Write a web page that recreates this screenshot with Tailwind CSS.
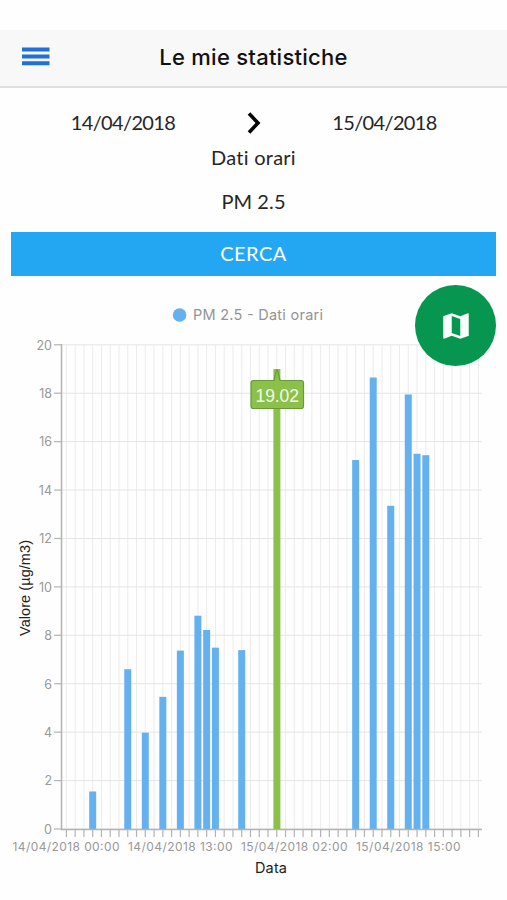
<!DOCTYPE html>
<html lang="it">
<head>
<meta charset="utf-8">
<title>Le mie statistiche</title>
<script src="https://cdn.jsdelivr.net/npm/@tailwindcss/browser@4"></script>
</head>
<body class="bg-white">
<div class="relative flex h-[900px] w-[507px] flex-col overflow-hidden bg-[#fefefe] pt-[30px] font-['Lato','Liberation_Sans',sans-serif] text-[#262626]">
  <header class="grid h-[58px] shrink-0 grid-cols-[72px_1fr_72px] items-center border-b-2 border-[#dedede] bg-[#f8f8f8]">
    <button class="pl-[22px]" aria-label="Menu">
      <svg class="-mt-1 block h-[19px] w-[28px]" viewBox="0 0 28 19" fill="#1f6fd8"><path d="M0 .5h27.5v4H0zM0 7.500h27.5v4H0zM0 14.300h27.5v4H0z"/></svg>
    </button>
    <h1 class="-mt-[2px] text-center font-['Inter',sans-serif] text-[22px] font-medium tracking-[0.25px] text-[#111]">Le mie statistiche</h1>
  </header>
  <section class="flex shrink-0 flex-col items-center text-[20px]">
    <div class="grid h-[47px] w-full grid-cols-[246px_16px_245px] items-end leading-[26px]">
      <span class="text-center tracking-[-0.65px]">14/04/2018</span>
      <svg class="mb-[1px] h-[22px] w-[16px]" viewBox="0 0 16 22" fill="none" stroke="#050505" stroke-width="3.600"><path d="M3 1.500 12 11 3 20.500"/></svg>
      <span class="text-center tracking-[-0.65px]">15/04/2018</span>
    </div>
    <div class="mt-[9px] h-[26px] leading-[26px] tracking-[0.25px]">Dati orari</div>
    <div class="mt-[18px] h-[26px] leading-[26px] tracking-[0.1px]">PM 2.5</div>
  </section>
  <button class="mx-[11px] mt-[18px] h-[44px] shrink-0 bg-[#24a7f3] pb-[2px] text-[20px] tracking-[0.5px] text-white">CERCA</button>
  <svg class="block h-[624px] w-[507px] shrink-0" viewBox="0 276 507 624" font-family="Inter, sans-serif">
    <g id="grid" stroke-width="1"></g>
    <g id="bars" fill="#65b1ef"></g>
    <path d="M61.500 344v485.500H482" fill="none" stroke="#b3b3b3" stroke-width="1.500"/>
    <g id="ticks" stroke="#b3b3b3" stroke-width="1.200"></g>
    <g id="values" font-size="12.500" fill="#999" text-anchor="end"></g>
    <g font-size="12" fill="#999">
      <text x="12.500" y="850.500" textLength="107">14/04/2018 00:00</text>
      <text x="128" y="850.500" textLength="104.500">14/04/2018 13:00</text>
      <text x="241" y="850.500" textLength="106.500">15/04/2018 02:00</text>
      <text x="356" y="850.500" textLength="104.500">15/04/2018 15:00</text>
    </g>
    <circle cx="179.600" cy="315" r="6.800" fill="#65b1ef"/>
    <text x="193" y="320.300" font-size="14.500" fill="#949494" textLength="130">PM 2.5 - Dati orari</text>
    <text x="255" y="873" font-size="14.500" fill="#222" textLength="32">Data</text>
    <text transform="translate(29.500 636) rotate(-90)" font-family="Liberation Sans, sans-serif" font-size="14.500" fill="#222" textLength="96">Valore (µg/m3)</text>
    <path d="M273.400 369h7v460h-7z" fill="#8bc04b"/>
    <path d="M253.500 380.500h20.500l2.500-10.500h1l2.500 10.500h21q2.500 0 2.500 2.500v23q0 2.500-2.500 2.500h-47.500q-2.500 0-2.500-2.500v-23q0-2.500 2.500-2.500z" fill="#8bc04b" stroke="#689b37" stroke-width="1.200"/>
    <text x="255.500" y="401.800" font-family="Liberation Sans, sans-serif" font-size="17.500" fill="#f3ffe4" textLength="43.500">19.02</text>
  </svg>
  <button class="absolute left-[415px] top-[285px] flex size-[81px] items-center justify-center rounded-full bg-[#07964f]" aria-label="Mappa">
    <svg class="size-[34px]" viewBox="0 0 24 24" fill="#f8fffb"><path d="M20.500 3l-.16.03L15 5.100 9 3 3.360 4.900c-.21.07-.36.25-.36.480V20.500c0 .28.22.5.5.5l.16-.03L9 18.900l6 2.100 5.640-1.900c.21-.07.36-.25.36-.480V3.500c0-.28-.22-.5-.5-.5zM15 19l-6-2.110V5l6 2.110V19z"/></svg>
  </button>
</div>
<script>
  const NS = 'http://www.w3.org/2000/svg';
  const add = (id, tag, attrs, text) => {
    const el = document.createElementNS(NS, tag);
    for (const k in attrs) el.setAttribute(k, attrs[k]);
    if (text !== undefined) el.textContent = text;
    document.getElementById(id).appendChild(el);
  };
  const xAt = i => 66.4 + i * 8.766;
  const yAt = v => 829 - v * 24.21;
  for (let i = 0; i < 48; i++) {
    add('grid', 'line', { x1: xAt(i), x2: xAt(i), y1: 345, y2: 829, stroke: '#ececec' });
    add('ticks', 'line', { x1: xAt(i), x2: xAt(i), y1: 829, y2: 837 });
  }
  for (let v = 0; v <= 20; v += 2) {
    add('grid', 'line', { x1: 62, x2: 482, y1: yAt(v), y2: yAt(v), stroke: '#e5e5e5' });
    add('ticks', 'line', { x1: 54, x2: 62, y1: yAt(v), y2: yAt(v) });
    add('values', 'text', { x: 52, y: yAt(v) + 4.8 }, v);
  }
  const data = [[3,1.55],[7,6.6],[9,3.98],[11,5.46],[13,7.37],[15,8.81],[16,8.22],[17,7.49],[20,7.39],[33,15.24],[35,18.65],[37,13.35],[39,17.95],[40,15.5],[41,15.44]];
  for (const [i, v] of data) add('bars', 'rect', { x: xAt(i) - 3.5, y: yAt(v), width: 7, height: 829 - yAt(v) });
</script>
</body>
</html>
